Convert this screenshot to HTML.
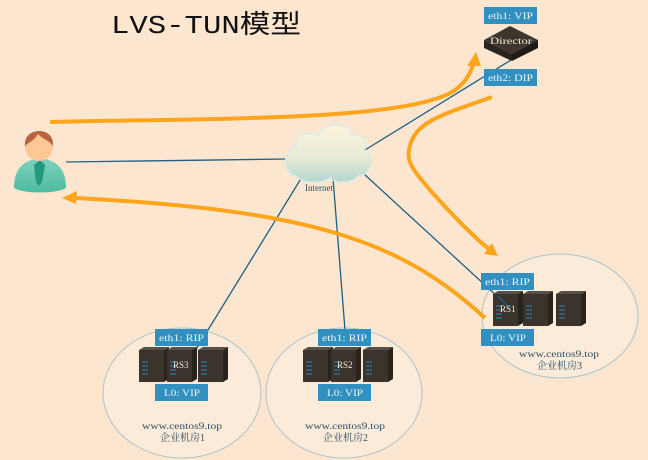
<!DOCTYPE html>
<html><head><meta charset="utf-8"><style>
html,body{margin:0;padding:0;background:#fde6cf;}
svg{display:block}
text{font-family:"Liberation Serif","Noto Serif CJK SC",serif;}
</style></head><body>
<svg width="648" height="460" viewBox="0 0 648 460" xmlns="http://www.w3.org/2000/svg">
<defs>
<linearGradient id="cl" x1="0" y1="0" x2="0" y2="1"><stop offset="0" stop-color="#fdf3dc"/><stop offset="0.55" stop-color="#e8ecd6"/><stop offset="1" stop-color="#b5d6d0"/></linearGradient>
<linearGradient id="bd" x1="0" y1="0" x2="0" y2="1"><stop offset="0" stop-color="#7fd2bd"/><stop offset="1" stop-color="#4dbb9e"/></linearGradient>
<g id="srv"><rect x="0" y="0" width="25" height="32" fill="#3b342d"/><polygon points="0,0 5,-3 30,-3 25,0" fill="#56504a"/><polygon points="25,0 30,-3 30,29 25,32" fill="#29231e"/><g stroke="#2f7aa8" stroke-width="1.2"><line x1="3" y1="12" x2="9" y2="12"/><line x1="3" y1="16" x2="9" y2="16"/><line x1="3" y1="20" x2="9" y2="20"/><line x1="3" y1="24" x2="9" y2="24"/></g></g>
</defs>
<rect width="648" height="460" fill="#fde6cf"/>
<text x="111" y="33" font-size="26" fill="#111" textLength="190" lengthAdjust="spacingAndGlyphs" style="font-family:'Liberation Mono','Noto Sans CJK SC',monospace">LVS-TUN模型</text>

<ellipse cx="182" cy="393" rx="79" ry="65" fill="#fcebd8" stroke="#a9c2cc" stroke-width="1"/>
<ellipse cx="344" cy="393" rx="78" ry="65" fill="#fcebd8" stroke="#a9c2cc" stroke-width="1"/>
<ellipse cx="560" cy="316" rx="78" ry="62" fill="#fcebd8" stroke="#a9c2cc" stroke-width="1"/>

<g stroke="#1e5f85" stroke-width="1.3" fill="none">
<line x1="66" y1="162" x2="286" y2="159"/>
<line x1="365" y1="150" x2="537" y2="44"/>
<line x1="302" y1="177" x2="192" y2="356"/>
<line x1="333" y1="178" x2="345" y2="330"/>
<line x1="364" y1="174" x2="510" y2="308"/>
</g>

<path d="M296,176 C282,174 282,150 296,146 C296,134 310,130 318,136 C322,122 350,120 352,136 C360,132 370,140 364,150 C376,154 372,176 358,176 C352,184 336,184 330,178 C322,184 304,184 296,176Z" fill="url(#cl)" stroke="#d8ecea" stroke-width="1.5"/>
<text x="305" y="191" font-size="9" fill="#2a4f66">Internet</text>

<path d="M14,188 C14,168 24,160 40,158 C56,160 66,168 66,188 C56,194 24,194 14,188Z" fill="url(#bd)"/>
<polygon points="40,160 45,165 42,182 39,186 36,182 34,165" fill="#22997c"/>
<circle cx="39" cy="147" r="14" fill="#fec896"/>
<path d="M25,146 C23,126 55,126 53,146 C49,140 42,139 38,134 C34,141 29,142 25,146Z" fill="#b7643f"/>

<g stroke="#ffa51c" stroke-width="4" fill="none">
<path d="M50,122 C200,118 410,122 455,90 C466,82 471,72 473,64"/>
<path d="M492,97 C450,112 420,120 412,140 C404,160 410,166 430,190 C455,218 475,238 490,250"/>
<path d="M485,318 C400,240 310,210 75,198"/>
</g>
<polygon points="467,66 481,66 476,52" fill="#ffa51c"/>
<polygon points="484,254 498,256 492,243" fill="#ffa51c"/>
<polygon points="62,198 77,191 76,204" fill="#ffa51c"/>

<polygon points="484,40 510,26 538,40 512,54" fill="#3d352e"/>
<polygon points="484,40 512,54 512,61 484,48" fill="#2a241f"/>
<polygon points="512,54 538,40 538,48 512,61" fill="#1e1a16"/>
<text x="490" y="44" font-size="9" fill="#f0ead8" textLength="42" lengthAdjust="spacingAndGlyphs">Director</text>

<g fill="#3190bf">
<rect x="484" y="7" width="53" height="17"/><rect x="484" y="69" width="53" height="17"/>
<rect x="155" y="329" width="53" height="17"/><rect x="155" y="384" width="53" height="17"/>
<rect x="318" y="329" width="53" height="17"/><rect x="318" y="384" width="53" height="17"/>
<rect x="481" y="273" width="53" height="17"/><rect x="481" y="329" width="53" height="17"/>
</g>
<g font-size="9.5" fill="#eef6fa" style="font-family:'Liberation Mono',monospace">
<text x="488" y="19" textLength="45" lengthAdjust="spacingAndGlyphs">eth1: VIP</text><text x="488" y="81" textLength="45" lengthAdjust="spacingAndGlyphs">eth2: DIP</text>
<text x="159" y="341" textLength="45" lengthAdjust="spacingAndGlyphs">eth1: RIP</text><text x="164" y="396" textLength="36" lengthAdjust="spacingAndGlyphs">L0: VIP</text>
<text x="322" y="341" textLength="45" lengthAdjust="spacingAndGlyphs">eth1: RIP</text><text x="327" y="396" textLength="36" lengthAdjust="spacingAndGlyphs">L0: VIP</text>
<text x="485" y="285" textLength="45" lengthAdjust="spacingAndGlyphs">eth1: RIP</text><text x="490" y="341" textLength="36" lengthAdjust="spacingAndGlyphs">L0: VIP</text>
</g>

<use href="#srv" x="139" y="350"/><use href="#srv" x="167" y="350"/><use href="#srv" x="198" y="350"/>
<use href="#srv" x="303" y="350"/><use href="#srv" x="331" y="350"/><use href="#srv" x="363" y="350"/>
<use href="#srv" x="493" y="294"/><use href="#srv" x="523" y="294"/><use href="#srv" x="556" y="294"/>
<line x1="510" y1="308" x2="498" y2="296" stroke="#1e5f85" stroke-width="1.3"/>
<g font-size="9" fill="#f2ecdc">
<text x="173" y="368">RS3</text><text x="337" y="368">RS2</text><text x="500" y="312">RS1</text>
</g>

<g font-size="9" fill="#2a4f66" style="font-family:'Liberation Mono',monospace">
<text x="142" y="429" textLength="80" lengthAdjust="spacingAndGlyphs">www.centos9.top</text><text x="305" y="429" textLength="80" lengthAdjust="spacingAndGlyphs">www.centos9.top</text><text x="519" y="357" textLength="80" lengthAdjust="spacingAndGlyphs">www.centos9.top</text>
</g>
<g font-size="10" fill="#2a4f66" style="font-family:'Noto Sans CJK SC',sans-serif">
<text x="160" y="441">企业机房1</text><text x="323" y="441">企业机房2</text><text x="537" y="369">企业机房3</text>
</g>
</svg>
</body></html>
